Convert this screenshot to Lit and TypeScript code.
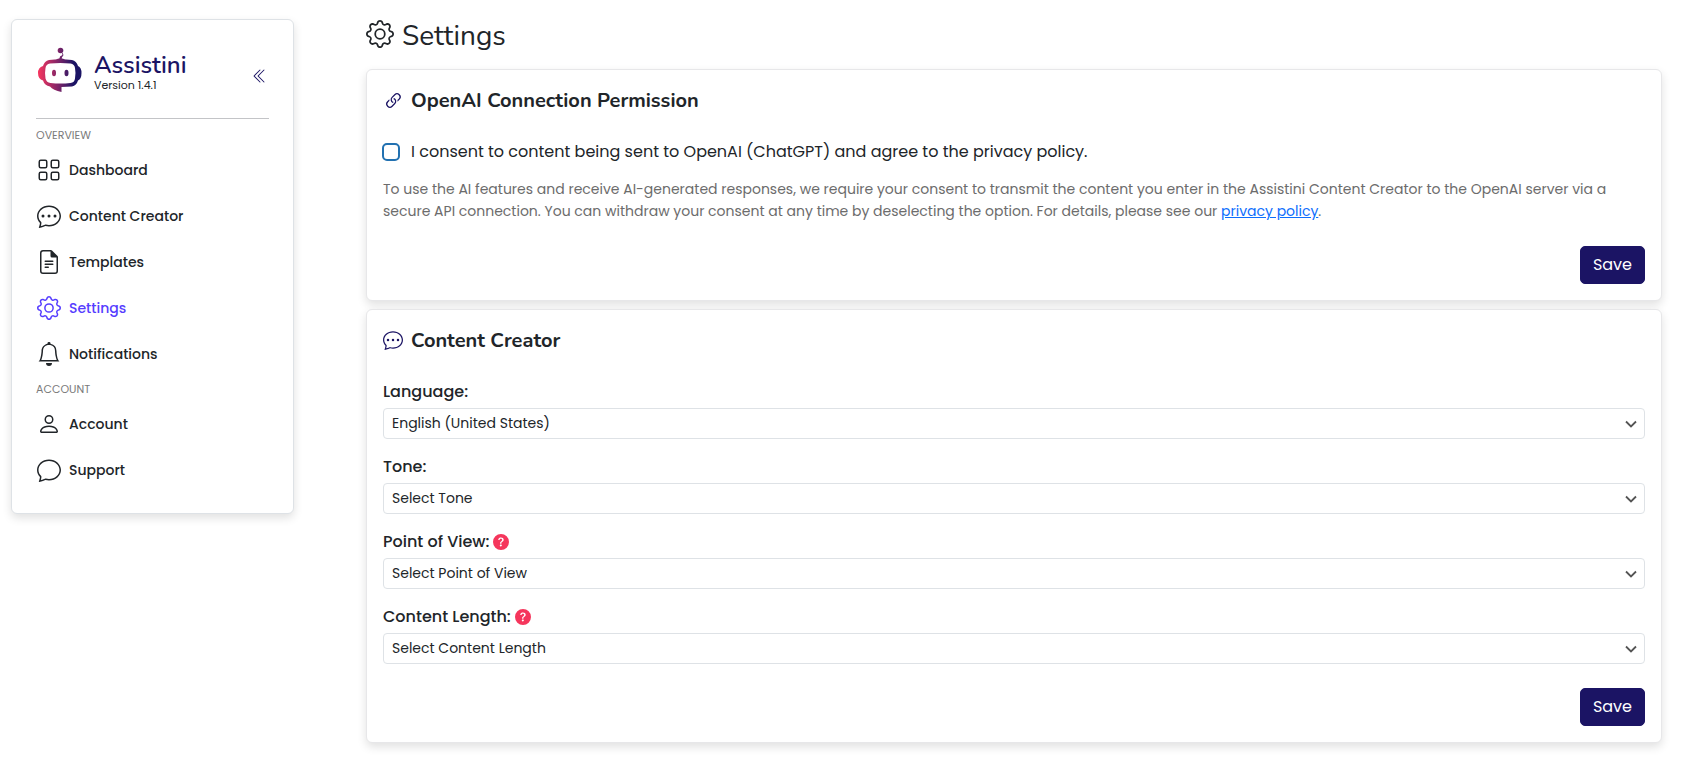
import { LitElement, html, css, svg, nothing, type SVGTemplateResult } from "lit";
import { customElement, property } from "lit/decorators.js";
import { classMap } from "lit/directives/class-map.js";

const bubble = svg`<path d="M2.678 11.894a1 1 0 0 1 .287.801 11 11 0 0 1-.398 2c1.395-.323 2.247-.697 2.634-.893a1 1 0 0 1 .71-.074A8 8 0 0 0 8 14c3.996 0 7-2.807 7-6s-3.004-6-7-6-7 2.808-7 6c0 1.468.617 2.83 1.678 3.894m-.493 3.905a22 22 0 0 1-.713.129c-.2.032-.352-.176-.273-.362a10 10 0 0 0 .244-.637l.003-.01c.248-.72.45-1.548.524-2.319C.743 11.37 0 9.76 0 8c0-3.866 3.582-7 8-7s8 3.134 8 7-3.582 7-8 7a9 9 0 0 1-2.347-.306c-.52.263-1.639.742-3.468 1.105"/>`;

const icons: Record<string, SVGTemplateResult> = {
  grid: svg`<g fill="none" stroke="currentColor"><rect x="1.5" y="1.5" width="5" height="5" rx="1"/><rect x="9.5" y="1.5" width="5" height="5" rx="1"/><rect x="1.5" y="9.5" width="5" height="5" rx="1"/><rect x="9.5" y="9.5" width="5" height="5" rx="1"/></g>`,
  chat: bubble,
  chatDots: svg`${bubble}<path d="M5 8a1 1 0 1 1-2 0 1 1 0 0 1 2 0m4 0a1 1 0 1 1-2 0 1 1 0 0 1 2 0m3 1a1 1 0 1 0 0-2 1 1 0 0 0 0 2"/>`,
  file: svg`<path d="M5 7.5a.5.5 0 0 1 .5-.5h5a.5.5 0 0 1 0 1h-5a.5.5 0 0 1-.5-.5m0 2a.5.5 0 0 1 .5-.5h5a.5.5 0 0 1 0 1h-5a.5.5 0 0 1-.5-.5m0 2a.5.5 0 0 1 .5-.5h2a.5.5 0 0 1 0 1h-2a.5.5 0 0 1-.5-.5"/><path d="M9.293 0H4a2 2 0 0 0-2 2v12a2 2 0 0 0 2 2h8a2 2 0 0 0 2-2V4.707A1 1 0 0 0 13.707 4L10 .293A1 1 0 0 0 9.293 0M9 1v3a1 1 0 0 0 1 1h3v9a1 1 0 0 1-1 1H4a1 1 0 0 1-1-1V2a1 1 0 0 1 1-1z"/>`,
  gear: svg`<path d="M8 4.754a3.246 3.246 0 1 0 0 6.492 3.246 3.246 0 0 0 0-6.492M5.754 8a2.246 2.246 0 1 1 4.492 0 2.246 2.246 0 0 1-4.492 0"/><path d="M9.796 1.343c-.527-1.79-3.065-1.79-3.592 0l-.094.319a.873.873 0 0 1-1.255.52l-.292-.16c-1.64-.892-3.433.902-2.54 2.541l.159.292a.873.873 0 0 1-.52 1.255l-.319.094c-1.79.527-1.79 3.065 0 3.592l.319.094a.873.873 0 0 1 .52 1.255l-.16.292c-.892 1.64.901 3.434 2.541 2.54l.292-.159a.873.873 0 0 1 1.255.52l.094.319c.527 1.79 3.065 1.79 3.592 0l.094-.319a.873.873 0 0 1 1.255-.52l.292.16c1.64.893 3.434-.902 2.54-2.541l-.159-.292a.873.873 0 0 1 .52-1.255l.319-.094c1.79-.527 1.79-3.065 0-3.592l-.319-.094a.873.873 0 0 1-.52-1.255l.16-.292c.893-1.64-.902-3.433-2.541-2.54l-.292.159a.873.873 0 0 1-1.255-.52zm-2.633.283c.246-.835 1.428-.835 1.674 0l.094.319a1.873 1.873 0 0 0 2.693 1.115l.291-.16c.764-.415 1.6.42 1.184 1.185l-.159.292a1.873 1.873 0 0 0 1.116 2.692l.318.094c.835.246.835 1.428 0 1.674l-.319.094a1.873 1.873 0 0 0-1.115 2.693l.16.291c.415.764-.42 1.6-1.185 1.184l-.291-.159a1.873 1.873 0 0 0-2.693 1.116l-.094.318c-.246.835-1.428.835-1.674 0l-.094-.319a1.873 1.873 0 0 0-2.692-1.115l-.292.16c-.764.415-1.6-.42-1.184-1.185l.159-.291A1.873 1.873 0 0 0 1.945 8.93l-.319-.094c-.835-.246-.835-1.428 0-1.674l.319-.094A1.873 1.873 0 0 0 3.06 4.377l-.16-.292c-.415-.764.42-1.6 1.185-1.184l.292.159a1.873 1.873 0 0 0 2.692-1.115z"/>`,
  bell: svg`<path d="M8 16a2 2 0 0 0 2-2H6a2 2 0 0 0 2 2M8 1.918l-.797.161A4 4 0 0 0 4 6c0 .628-.134 2.197-.459 3.742-.16.767-.376 1.566-.663 2.258h10.244c-.287-.692-.502-1.49-.663-2.258C12.134 8.197 12 6.628 12 6a4 4 0 0 0-3.203-3.92zM14.22 12c.223.447.481.801.78 1H1c.299-.199.557-.553.78-1C2.68 10.2 3 6.88 3 6c0-2.42 1.72-4.44 4.005-4.901a1 1 0 1 1 1.99 0A5 5 0 0 1 13 6c0 .88.32 4.2 1.22 6"/>`,
  person: svg`<path d="M8 8a3 3 0 1 0 0-6 3 3 0 0 0 0 6m2-3a2 2 0 1 1-4 0 2 2 0 0 1 4 0m4 8c0 1-1 1-1 1H3s-1 0-1-1 1-4 6-4 6 3 6 4m-1-.004c-.001-.246-.154-.986-.832-1.664C11.516 10.68 10.289 10 8 10s-3.516.68-4.168 1.332c-.678.678-.83 1.418-.832 1.664z"/>`,
  link: svg`<g transform="rotate(-45 8 8)"><path d="M6.354 5.5H4a3 3 0 0 0 0 6h3a3 3 0 0 0 2.83-4H9c-.086 0-.17.01-.25.031A2 2 0 0 1 7 10.5H4a2 2 0 1 1 0-4h1.535c.218-.376.495-.714.82-1z"/><path d="M9 5.5a3 3 0 0 0-2.83 4h1.098A2 2 0 0 1 9 6.5h3a2 2 0 1 1 0 4h-1.535a4 4 0 0 1-.82 1H12a3 3 0 1 0 0-6z"/></g>`,
  collapse: svg`<path d="M8.354 1.646a.5.5 0 0 1 0 .708L2.707 8l5.647 5.646a.5.5 0 0 1-.708.708l-6-6a.5.5 0 0 1 0-.708l6-6a.5.5 0 0 1 .708 0"/><path d="M12.354 1.646a.5.5 0 0 1 0 .708L6.707 8l5.647 5.646a.5.5 0 0 1-.708.708l-6-6a.5.5 0 0 1 0-.708l6-6a.5.5 0 0 1 .708 0"/>`,
  help: svg`<path d="M16 8A8 8 0 1 1 0 8a8 8 0 0 1 16 0M5.496 6.033h.825c.138 0 .248-.113.266-.25.09-.656.54-1.134 1.342-1.134.686 0 1.314.343 1.314 1.168 0 .635-.374.927-.965 1.371-.673.489-1.206 1.06-1.168 1.987l.003.217a.25.25 0 0 0 .25.246h.811a.25.25 0 0 0 .25-.25v-.105c0-.718.273-.927 1.01-1.486.609-.463 1.244-.977 1.244-2.056 0-1.511-1.276-2.241-2.673-2.241-1.267 0-2.655.59-2.75 2.286a.237.237 0 0 0 .241.247m2.325 6.443c.61 0 1.029-.394 1.029-.927 0-.552-.42-.94-1.029-.94-.584 0-1.009.388-1.009.94 0 .533.425.927 1.009.927"/>`,
};

@customElement("app-icon")
class AppIcon extends LitElement {
  @property() name = "";

  static styles = css`
    :host { display: block; flex: none; width: 24px; height: 24px; }
    svg { display: block; width: 100%; height: 100%; fill: currentColor; }
  `;

  render() {
    return html`<svg viewBox="0 0 16 16" aria-hidden="true">${icons[this.name]}</svg>`;
  }
}

interface NavItem { label: string; icon: string; active?: boolean; }
interface NavGroup { title: string; items: NavItem[]; }
interface Field { id: string; label: string; value: string; help?: boolean; }

const groups: NavGroup[] = [
  {
    title: "OVERVIEW",
    items: [
      { label: "Dashboard", icon: "grid" },
      { label: "Content Creator", icon: "chatDots" },
      { label: "Templates", icon: "file" },
      { label: "Settings", icon: "gear", active: true },
      { label: "Notifications", icon: "bell" },
    ],
  },
  {
    title: "ACCOUNT",
    items: [
      { label: "Account", icon: "person" },
      { label: "Support", icon: "chat" },
    ],
  },
];

const fields: Field[] = [
  { id: "language", label: "Language:", value: "English (United States)" },
  { id: "tone", label: "Tone:", value: "Select Tone" },
  { id: "view", label: "Point of View:", value: "Select Point of View", help: true },
  { id: "length", label: "Content Length:", value: "Select Content Length", help: true },
];

@customElement("app-sidebar")
class AppSidebar extends LitElement {
  static styles = css`
    :host {
      display: block;
      box-sizing: border-box;
      padding: 24px 24px 20px;
      border: 1px solid #dee2e6;
      border-radius: 6px;
      background: #fff;
      box-shadow: 0 4px 10px rgba(0, 0, 0, 0.12);
    }
    .brand { display: flex; align-items: center; height: 74px; border-bottom: 1px solid #c3c4c7; margin-bottom: 4px; }
    .logo { flex: none; width: 48px; height: 48px; margin-bottom: 22px; }
    .names { flex: 1; margin: 0 0 16px 10px; }
    .name { font: 600 24px/24px Nunito, sans-serif; color: #1b1464; }
    .version { font-size: 11px; line-height: 16px; }
    .collapse { border: 0; background: none; padding: 0; margin: 0 1px 10px 0; color: #1b1464; cursor: pointer; }
    .collapse app-icon { width: 16px; height: 16px; }
    .group { font-size: 11px; line-height: 24px; color: #7a7a7a; }
    .item {
      display: flex;
      align-items: center;
      gap: 8px;
      height: 46px;
      padding-left: 1px;
      font-weight: 500;
      font-size: 14px;
      color: #212529;
      text-decoration: none;
    }
    .active { color: #563dff; }
  `;

  render() {
    return html`
      <div class="brand">
        <svg class="logo" viewBox="0 0 48 48" aria-hidden="true">
          <defs>
            <linearGradient id="g" gradientUnits="userSpaceOnUse" x1="2" y1="0" x2="44" y2="0">
              <stop offset="0" stop-color="#f8365f" />
              <stop offset="0.5" stop-color="#7a2468" />
              <stop offset="0.85" stop-color="#1b1464" />
            </linearGradient>
          </defs>
          <g fill="url(#g)">
            <circle cx="24.5" cy="4.500" r="2.800" />
            <path d="M25.500 6Q29 9 26 11L25.500 14H23L24 10.500L26.500 9Z" />
            <path d="M19 14.500Q24.500 10 30 14.500Z" />
            <path fill-rule="evenodd" d="M13 14Q24.500 12.500 36 14Q40.500 15 42 20Q45.500 21.500 45.500 27Q45.500 33 42 34.500Q40.500 39.500 36 40.500L25.500 41V46Q17 44 14 40.500Q8.500 39.500 7 34.500Q2 33 2 27Q2 21.500 7 20Q8.500 15 13 14ZM14 17.500Q10 18 9.500 22Q8.500 27 9.500 32.500Q10.500 36.500 14.500 37Q24.500 38 34.500 37Q38.500 36.500 39 32.500Q40 27 39 22Q38.500 18 34.500 17.500Q24.500 16.700 14 17.500Z" />
            <ellipse cx="18" cy="27" rx="2" ry="3.200" />
            <ellipse cx="30.500" cy="27" rx="2" ry="3.200" />
          </g>
        </svg>
        <div class="names">
          <div class="name">Assistini</div>
          <div class="version">Version 1.4.1</div>
        </div>
        <button class="collapse" type="button" aria-label="Collapse menu"><app-icon name="collapse"></app-icon></button>
      </div>
      <nav>
        ${groups.map(
          (g) => html`
            <div class="group">${g.title}</div>
            ${g.items.map(
              (i) => html`<a class=${classMap({ item: true, active: !!i.active })} href="#"><app-icon name=${i.icon}></app-icon>${i.label}</a>`,
            )}
          `,
        )}
      </nav>
    `;
  }
}

@customElement("app-root")
class AppRoot extends LitElement {
  static styles = css`
    :host {
      display: grid;
      grid-template-columns: 283px minmax(0, 1fr);
      align-items: start;
      gap: 72px;
      padding: 19px 36px 22px 11px;
      font-family: Poppins, sans-serif;
      font-size: 16px;
      line-height: 24px;
      color: #212529;
      background: #fff;
    }
    h1, h2 { display: flex; align-items: center; gap: 8px; margin: 0; font-family: Nunito, sans-serif; }
    h1 { font-weight: 400; font-size: 28px; line-height: 34px; margin-bottom: 16px; }
    h1 app-icon { width: 28px; height: 28px; margin-bottom: 4px; }
    h2 { font-weight: 700; font-size: 20px; line-height: 30px; margin-bottom: 24px; }
    h2 app-icon { width: 20px; height: 20px; margin-bottom: 2px; color: #1b1464; }
    .card {
      padding: 16px;
      border: 1px solid #e7e7e9;
      border-radius: 6px;
      background: #fff;
      box-shadow: 0 4px 10px rgba(0, 0, 0, 0.12);
    }
    .card + .card { margin-top: 8px; }
    .consent { display: flex; align-items: center; gap: 11px; }
    .check {
      appearance: none;
      flex: none;
      width: 18px;
      height: 18px;
      margin: 0 0 0 -1px;
      border: 2px solid #2271b1;
      border-radius: 5px;
      background: #fff;
    }
    .note { margin: 14px 0 24px; font-size: 14px; line-height: 22px; color: #6c6c6c; }
    .note a { color: #0d6efd; }
    .actions { display: flex; justify-content: flex-end; }
    .save {
      padding: 6px 12px;
      border: 1px solid #1b1464;
      border-radius: 5px;
      background: #1b1464;
      color: #fff;
      font: 400 16px/24px Poppins, sans-serif;
      cursor: pointer;
    }
    .field { margin-bottom: 16px; }
    .field:last-of-type { margin-bottom: 24px; }
    .label { display: flex; align-items: center; gap: 4px; margin-bottom: 4px; font-weight: 500; }
    .label app-icon { width: 16px; height: 16px; color: #f5365c; }
    .select {
      appearance: none;
      display: block;
      box-sizing: border-box;
      width: 100%;
      height: 31px;
      padding: 4px 32px 4px 8px;
      border: 1px solid #dee2e6;
      border-radius: 4px;
      color: #212529;
      font: 400 14px/21px Poppins, sans-serif;
      background: #fff url("data:image/svg+xml,%3Csvg xmlns='http://www.w3.org/2000/svg' viewBox='0 0 12 8'%3E%3Cpath d='M1 1.5l5 5 5-5' fill='none' stroke='%23555' stroke-width='1.8'/%3E%3C/svg%3E") no-repeat right 7px center / 12px 8px;
    }
  `;

  render() {
    return html`
      <app-sidebar></app-sidebar>
      <main>
        <h1><app-icon name="gear"></app-icon>Settings</h1>
        <section class="card">
          <h2><app-icon name="link"></app-icon>OpenAI Connection Permission</h2>
          <div class="consent">
            <input class="check" type="checkbox" id="consent" />
            <label for="consent">I consent to content being sent to OpenAI (ChatGPT) and agree to the privacy policy.</label>
          </div>
          <p class="note">
            To use the AI features and receive AI-generated responses, we require your consent to transmit the content you
            enter in the Assistini Content Creator to the OpenAI server via a secure API connection. You can withdraw your
            consent at any time by deselecting the option. For details, please see our <a href="#">privacy policy</a>.
          </p>
          <div class="actions"><button class="save" type="button">Save</button></div>
        </section>
        <section class="card">
          <h2><app-icon name="chatDots"></app-icon>Content Creator</h2>
          <div>
            ${fields.map(
              (f) => html`
                <div class="field">
                  <label class="label" for=${f.id}>${f.label}${f.help ? html`<app-icon name="help"></app-icon>` : nothing}</label>
                  <select class="select" id=${f.id}><option>${f.value}</option></select>
                </div>
              `,
            )}
          </div>
          <div class="actions"><button class="save" type="button">Save</button></div>
        </section>
      </main>
    `;
  }
}
